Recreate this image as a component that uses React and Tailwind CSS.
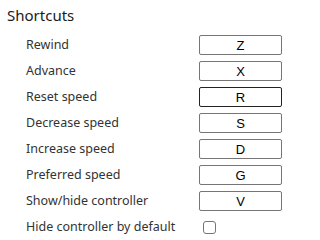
import React from "react";

const shortcuts = [
  { label: "Rewind", key: "Z" },
  { label: "Advance", key: "X" },
  { label: "Reset speed", key: "R", active: true },
  { label: "Decrease speed", key: "S" },
  { label: "Increase speed", key: "D" },
  { label: "Preferred speed", key: "G" },
  { label: "Show/hide controller", key: "V" },
];

const App = () => {
  return (
    <div className="w-[318px] h-[235px] bg-white overflow-hidden font-['Noto_Sans',sans-serif]">
      <h1 className="pl-[7px] pt-[5px] text-[15px] leading-[20px] text-[#1a1a1a]">
        Shortcuts
      </h1>
      <div className="mt-[7px] pl-[26px]">
        {shortcuts.map((s) => (
          <div key={s.key} className="flex items-center h-[26px]">
            <label className="w-[173px] text-[12.5px] text-[#333]">{s.label}</label>
            <input
              type="text"
              readOnly
              value={s.key}
              className={`w-[83px] h-[20px] border rounded-[2px] text-center text-[13px] text-black font-['Liberation_Sans',sans-serif] ${
                s.active ? "border-[#222]" : "border-[#767676]"
              }`}
            />
          </div>
        ))}
        <div className="flex items-center h-[26px]">
          <label className="w-[173px] text-[12.5px] text-[#333]">
            Hide controller by default
          </label>
          <span className="ml-[4px] w-[13px] h-[13px] border border-[#767676] rounded-[3px] bg-white" />
        </div>
      </div>
    </div>
  );
};

export default App;
